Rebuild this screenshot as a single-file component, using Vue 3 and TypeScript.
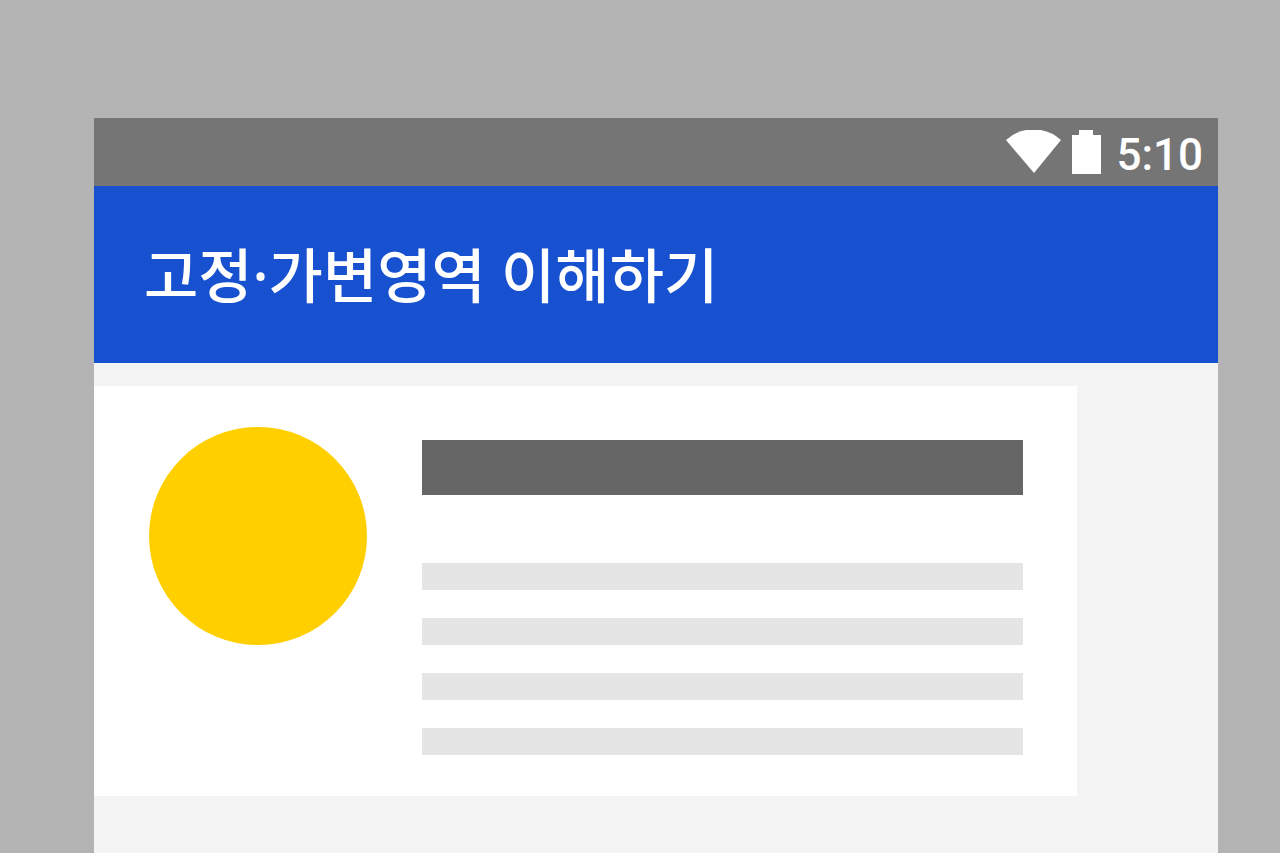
<script setup lang="ts">
const title: string = '고정·가변영역 이해하기'
const time: string = '5:10'
const lineCount: number = 4
</script>

<template>
  <div class="stage">
    <main class="phone">
      <div class="status">
        <svg class="wifi" viewBox="0 0 55 44" aria-hidden="true">
          <path d="M0 10Q9 2 20 0H35Q46 2 55 10L28 43Z" fill="#fff" />
        </svg>
        <svg class="battery" viewBox="0 0 30 44" aria-hidden="true">
          <path d="M8 0H22V5H30V44H1V5H8Z" fill="#fff" />
        </svg>
        <time class="clock">{{ time }}</time>
      </div>
      <header class="bar">
        <h1 class="title">{{ title }}</h1>
      </header>
      <section class="content">
        <article class="card">
          <div class="avatar"></div>
          <div class="copy">
            <div class="heading"></div>
            <div class="lines">
              <div v-for="n in lineCount" :key="n" class="line"></div>
            </div>
          </div>
        </article>
      </section>
    </main>
  </div>
</template>

<style>
body {
  margin: 0;
  background: #b4b4b4;
}
</style>

<style scoped>
.stage {
  box-sizing: border-box;
  min-height: 100vh;
  display: flex;
  padding: 118px 62px 0 94px;
  background: #b4b4b4;
}
.phone {
  flex: 1;
  min-width: 0;
  display: flex;
  flex-direction: column;
  background: #f4f4f4;
}
.status {
  height: 68px;
  box-sizing: border-box;
  padding-right: 15px;
  display: flex;
  align-items: center;
  justify-content: flex-end;
  background: #757575;
}
.wifi {
  width: 55px;
  height: 44px;
  margin-right: 10px;
}
.battery {
  width: 30px;
  height: 44px;
  margin-right: 15px;
}
.clock {
  color: #fff;
  font: 500 44px/68px Roboto, sans-serif;
  padding-top: 5px;
}
.bar {
  height: 177px;
  box-sizing: border-box;
  display: flex;
  align-items: center;
  padding: 0 50px;
  background: #1751d0;
}
.title {
  margin: 0;
  color: #fff;
  font: 500 59px/80px "Noto Sans", "Noto Sans CJK KR", sans-serif;
  white-space: nowrap;
}
.content {
  flex: 1;
  padding: 23px 141px 57px 0;
}
.card {
  display: flex;
  gap: 55px;
  padding: 41px 54px 41px 55px;
  background: #fff;
}
.avatar {
  flex: none;
  width: 218px;
  height: 218px;
  border-radius: 50%;
  background: #ffcf00;
}
.copy {
  flex: 1;
  padding-top: 13px;
}
.heading {
  height: 55px;
  margin-bottom: 68px;
  background: #666;
}
.lines {
  display: flex;
  flex-direction: column;
  gap: 28px;
}
.line {
  height: 27px;
  background: #e5e5e5;
}
</style>
